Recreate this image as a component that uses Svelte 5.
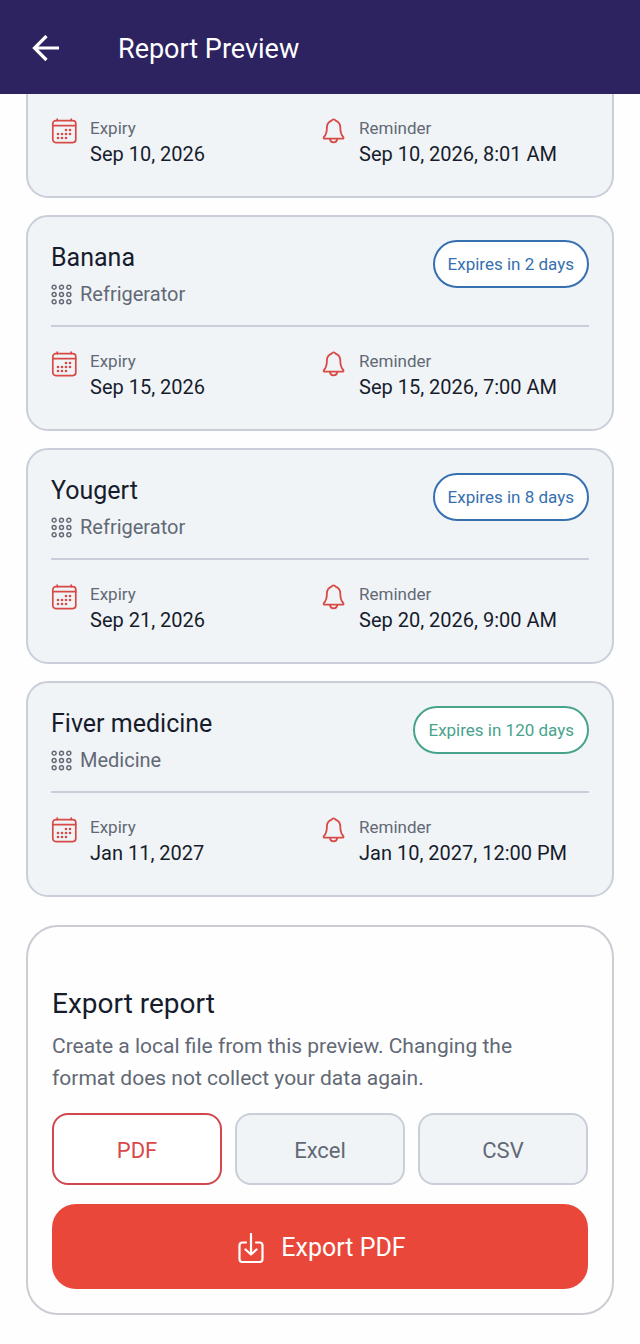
<script lang="ts">
    interface ReportItem {
        id: number;
        name?: string;
        category?: string;
        status?: string;
        tone?: 'soon' | 'safe';
        expiry: string;
        reminder: string;
    }

    const items: ReportItem[] = [
        { id: 1, expiry: 'Sep 10, 2026', reminder: 'Sep 10, 2026, 8:01 AM' },
        {
            id: 2,
            name: 'Banana',
            category: 'Refrigerator',
            status: 'Expires in 2 days',
            tone: 'soon',
            expiry: 'Sep 15, 2026',
            reminder: 'Sep 15, 2026, 7:00 AM',
        },
        {
            id: 3,
            name: 'Yougert',
            category: 'Refrigerator',
            status: 'Expires in 8 days',
            tone: 'soon',
            expiry: 'Sep 21, 2026',
            reminder: 'Sep 20, 2026, 9:00 AM',
        },
        {
            id: 4,
            name: 'Fiver medicine',
            category: 'Medicine',
            status: 'Expires in 120 days',
            tone: 'safe',
            expiry: 'Jan 11, 2027',
            reminder: 'Jan 10, 2027, 12:00 PM',
        },
    ];

    const formats = ['PDF', 'Excel', 'CSV'];
    const gridDots = [3, 10, 17];
    const calendarDots = [
        [15, 12],
        [19, 12],
        [7, 16],
        [11, 16],
        [15, 16],
        [19, 16],
        [7, 20],
        [11, 20],
        [15, 20],
    ];

    let selected = $state('PDF');
</script>

{#snippet calendarIcon()}
    <svg class="icon" viewBox="0 0 26 26" aria-hidden="true">
        <g fill="none" stroke="currentColor" stroke-width="1.7" stroke-linecap="round">
            <rect x="1.8" y="2.6" width="23" height="22" rx="3" />
            <path d="M2 7.6h22.6M6.2 1v1.6M20.2 1v1.6" />
        </g>
        {#each calendarDots as [x, y]}
            <circle cx={x} cy={y} r="1.3" fill="currentColor" />
        {/each}
    </svg>
{/snippet}

{#snippet bellIcon()}
    <svg class="icon" viewBox="0 0 26 26" aria-hidden="true">
        <g
            fill="none"
            stroke="currentColor"
            stroke-width="1.8"
            stroke-linecap="round"
            stroke-linejoin="round"
        >
            <path
                d="M11.6 2.6c.8-1.6 3.2-1.6 4 0 3 1.2 4.7 3.6 4.7 6.8 0 5 .7 7.2 2.9 9.4.7.8.3 1.9-.8 1.9H4.8c-1.1 0-1.5-1.1-.8-1.9C6.2 16.600 6.900 14.400 6.900 9.400c0-3.200 1.700-5.600 4.700-6.800z"
            />
            <path d="M10 20.900c.3 4.500 6.900 4.500 7.200 0" />
        </g>
    </svg>
{/snippet}

<div class="screen">
    <header class="app-bar">
        <button class="back" aria-label="Back">
            <svg viewBox="0 0 28 28" aria-hidden="true">
                <path d="M27 13H3M14.500 1L2.500 13l12 12" fill="none" stroke="#fff" stroke-width="3.2" />
            </svg>
        </button>
        <h1>Report Preview</h1>
    </header>

    <main>
        <div class="items">
            {#each items as item (item.id)}
                <article class="card" class:cut={!item.name}>
                    {#if item.name}
                        <div class="card-head">
                            <div>
                                <h2>{item.name}</h2>
                                <p class="category">
                                    <svg viewBox="0 0 20 20" aria-hidden="true">
                                        {#each gridDots as y}
                                            {#each gridDots as x}
                                                <circle cx={x} cy={y} r="1.9" />
                                            {/each}
                                        {/each}
                                    </svg>
                                    {item.category}
                                </p>
                            </div>
                            <span class="badge {item.tone}">{item.status}</span>
                        </div>
                    {/if}
                    <dl class="dates">
                        <div class="date">
                            {@render calendarIcon()}
                            <div>
                                <dt>Expiry</dt>
                                <dd>{item.expiry}</dd>
                            </div>
                        </div>
                        <div class="date">
                            {@render bellIcon()}
                            <div>
                                <dt>Reminder</dt>
                                <dd>{item.reminder}</dd>
                            </div>
                        </div>
                    </dl>
                </article>
            {/each}
        </div>

        <section class="export-panel">
            <h2>Export report</h2>
            <p>
                Create a local file from this preview. Changing the format does not collect your data
                again.
            </p>
            <div class="formats" role="group" aria-label="Export format">
                {#each formats as format}
                    <button
                        class="format"
                        class:active={selected === format}
                        aria-pressed={selected === format}
                        onclick={() => (selected = format)}
                    >
                        {format}
                    </button>
                {/each}
            </div>
            <button class="export">
                <svg viewBox="0 0 26 30" aria-hidden="true">
                    <g
                        fill="none"
                        stroke="currentColor"
                        stroke-width="2.2"
                        stroke-linecap="round"
                        stroke-linejoin="round"
                    >
                        <path d="M8 9.500H4.500a3 3 0 0 0-3 3V26a3 3 0 0 0 3 3h17a3 3 0 0 0 3-3V12.500a3 3 0 0 0-3-3H18" />
                        <path d="M13 1v20.500M7.500 16.500l5.500 5 5.500-5" />
                    </g>
                </svg>
                Export {selected}
            </button>
        </section>
    </main>
</div>

<style>
    :global(body) {
        margin: 0;
        background: #fefefe;
    }

    .screen {
        font-family: Roboto, 'Liberation Sans', sans-serif;
        color: #171c2c;
    }

    h1,
    h2,
    p,
    dl,
    dd {
        margin: 0;
        font-weight: 400;
    }

    button {
        font-family: inherit;
        cursor: pointer;
    }

    .app-bar {
        display: flex;
        align-items: center;
        gap: 58px;
        height: 94px;
        padding: 4px 32px 0;
        box-sizing: border-box;
        background: #2d2360;
        color: #fff;
    }

    .app-bar h1 {
        font-size: 27px;
        line-height: 36px;
    }

    .back {
        display: flex;
        padding: 0;
        border: none;
        background: none;
    }

    .back svg {
        width: 28px;
        height: 28px;
    }

    main {
        padding: 0 26px 30px;
    }

    .items {
        display: flex;
        flex-direction: column;
        gap: 17px;
    }

    .card {
        padding: 23px 23px 28px;
        border: 2px solid #c9ced8;
        border-radius: 22px;
        background: #f0f4f7;
    }

    /* the topmost card continues under the app bar */
    .card.cut {
        padding-top: 0;
        border-top: none;
        border-top-left-radius: 0;
        border-top-right-radius: 0;
    }

    .card-head {
        display: flex;
        justify-content: space-between;
        align-items: flex-start;
        padding-bottom: 17px;
        border-bottom: 2px solid #c9ced8;
    }

    .card-head h2 {
        font-size: 25px;
        line-height: 36px;
    }

    .category {
        display: flex;
        align-items: center;
        gap: 8px;
        margin-top: 4px;
        font-size: 20px;
        line-height: 28px;
        color: #626975;
    }

    .category svg {
        width: 21px;
        height: 21px;
        fill: none;
        stroke: currentColor;
        stroke-width: 1.4;
    }

    .badge {
        padding: 11px 13px;
        border: 2px solid currentColor;
        border-radius: 25px;
        background: #fff;
        font-size: 17px;
        line-height: 22px;
    }

    .badge.soon {
        color: #3670b0;
    }

    .badge.safe {
        color: #48a38c;
    }

    .dates {
        display: grid;
        grid-template-columns: 1fr 1fr;
        padding-top: 22px;
    }

    .date {
        display: flex;
        align-items: flex-start;
        gap: 13px;
    }

    .icon {
        flex: none;
        width: 26px;
        height: 26px;
        margin-top: 2px;
        color: #d84a45;
    }

    dt {
        font-size: 17px;
        line-height: 24px;
        color: #626975;
    }

    dd {
        font-size: 20px;
        line-height: 28px;
    }

    .export-panel {
        margin-top: 28px;
        padding: 59px 24px 24px;
        border: 2px solid #cbcdd4;
        border-radius: 32px;
    }

    .export-panel h2 {
        font-size: 28px;
        line-height: 36px;
    }

    .export-panel p {
        margin-top: 8px;
        padding-right: 24px;
        font-size: 21px;
        line-height: 32px;
        color: #626975;
    }

    .formats {
        display: grid;
        grid-template-columns: repeat(3, 1fr);
        gap: 13px;
        margin-top: 19px;
    }

    .format {
        height: 72px;
        padding: 2px 0 0;
        border: 2px solid #c9ced8;
        border-radius: 16px;
        background: #f0f4f7;
        font-size: 22px;
        color: #626975;
    }

    .format.active {
        border-color: #d2474b;
        background: #fff;
        color: #d9484a;
    }

    .export {
        display: flex;
        justify-content: center;
        align-items: center;
        gap: 17px;
        width: 100%;
        height: 85px;
        margin-top: 19px;
        padding: 2px 0 0 4px;
        border: none;
        border-radius: 24px;
        background: #e9473a;
        color: #fff;
        font-size: 25px;
    }

    .export svg {
        width: 26px;
        height: 30px;
    }
</style>
